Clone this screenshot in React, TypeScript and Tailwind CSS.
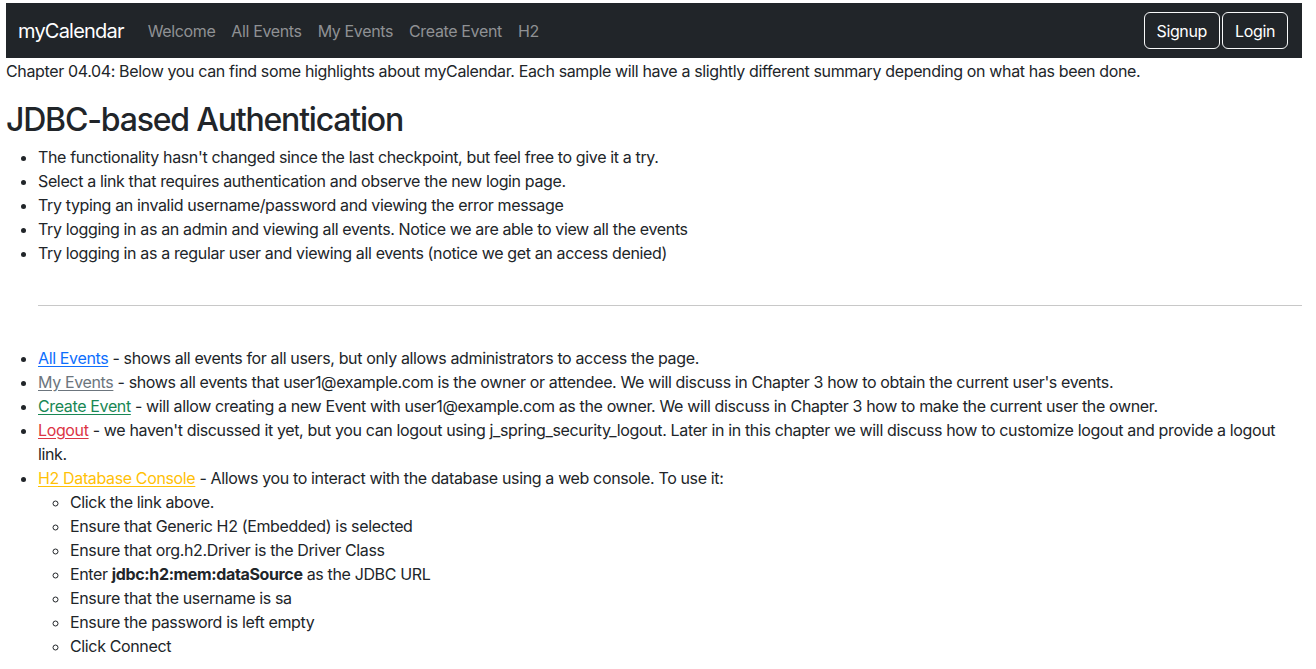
export default function App() {
  const linkBase = "underline underline-offset-2";
  return (
    <div className="min-h-screen bg-white text-[#212529] text-[16px] leading-6 tracking-[-0.36px] pl-[6px] pr-[14px] pt-[3px]" style={{ fontFamily: 'Inter, "Noto Sans", sans-serif' }}>
      <nav className="bg-[#212529] h-[55px] flex items-center pl-3 pr-[14px]">
        <span className="text-white text-[20px] tracking-[-0.8px] mr-4">myCalendar</span>
        <ul className="flex items-center">
          {["Welcome", "All Events", "My Events", "Create Event", "H2"].map((l) => (
            <li key={l} className="px-2 text-[#8f9194]">{l}</li>
          ))}
        </ul>
        <div className="ml-auto flex gap-[2px]">
          <button className="h-[37px] px-3 rounded-md border border-[#f8f9fa] text-white">Signup</button>
          <button className="h-[37px] px-3 rounded-md border border-[#f8f9fa] text-white">Login</button>
        </div>
      </nav>
      <p className="mt-[1px] mb-4">Chapter 04.04: Below you can find some highlights about myCalendar. Each sample will have a slightly different summary depending on what has been done.</p>
      <h1 className="text-[32px] pt-[4px] leading-[34px] font-medium tracking-[-1.2px] mb-2">JDBC-based Authentication</h1>
      <ul className="list-disc pl-8">
        <li>The functionality hasn't changed since the last checkpoint, but feel free to give it a try.</li>
        <li>Select a link that requires authentication and observe the new login page.</li>
        <li>Try typing an invalid username/password and viewing the error message</li>
        <li>Try logging in as an admin and viewing all events. Notice we are able to view all the events</li>
        <li>Try logging in as a regular user and viewing all events (notice we get an access denied)</li>
      </ul>
      <div className="pl-8 pt-10">
        <hr className="border-t border-[#c8c8c8]" />
      </div>
      <ul className="list-disc pl-8 mt-10">
        <li><a className={`${linkBase} text-[#0d6efd]`}>All Events</a> - shows all events for all users, but only allows administrators to access the page.</li>
        <li><a className={`${linkBase} text-[#6c757d]`}>My Events</a> - shows all events that user1@example.com is the owner or attendee. We will discuss in Chapter 3 how to obtain the current user's events.</li>
        <li><a className={`${linkBase} text-[#198754]`}>Create Event</a> - will allow creating a new Event with user1@example.com as the owner. We will discuss in Chapter 3 how to make the current user the owner.</li>
        <li><a className={`${linkBase} text-[#dc3545]`}>Logout</a> - we haven't discussed it yet, but you can logout using j_spring_security_logout. Later in in this chapter we will discuss how to customize logout and provide a logout link.</li>
        <li>
          <a className={`${linkBase} text-[#ffc107]`}>H2 Database Console</a> - Allows you to interact with the database using a web console. To use it:
          <ul className="list-[circle] pl-8">
            <li>Click the link above.</li>
            <li>Ensure that Generic H2 (Embedded) is selected</li>
            <li>Ensure that org.h2.Driver is the Driver Class</li>
            <li>Enter <b className="font-bold">jdbc:h2:mem:dataSource</b> as the JDBC URL</li>
            <li>Ensure that the username is sa</li>
            <li>Ensure the password is left empty</li>
            <li>Click Connect</li>
          </ul>
        </li>
      </ul>
    </div>
  );
}
